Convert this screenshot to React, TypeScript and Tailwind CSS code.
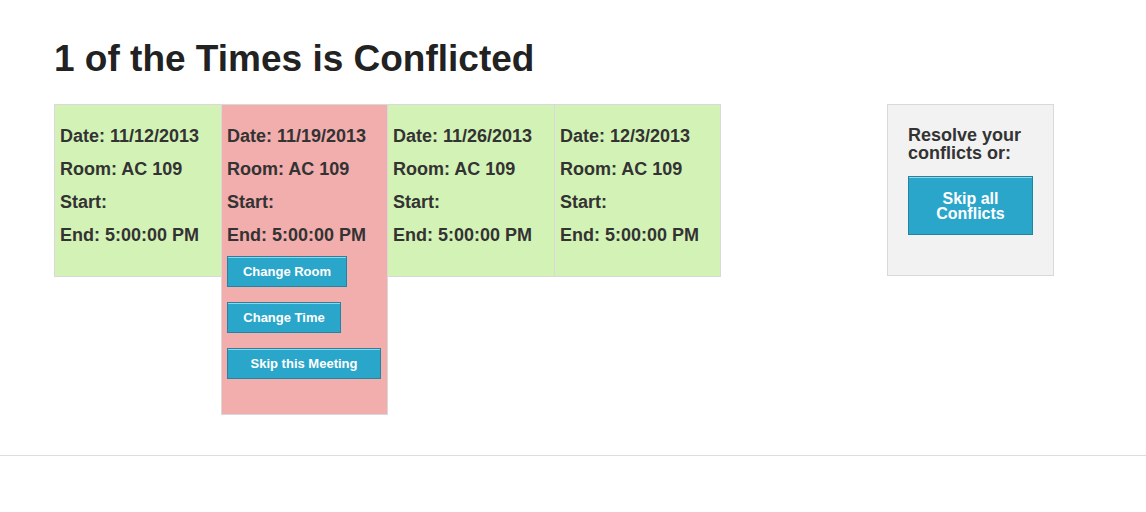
import React from "react";

const font = { fontFamily: '"Liberation Sans", Arial, Helvetica, sans-serif' };

function Card({ date, conflicted, w }: { date: string; conflicted?: boolean; w: string }) {
  return (
    <div
      className={
        w +
        " -ml-px first:ml-0 border border-[#d9d9d9] px-[5px] pt-[15px] text-[18px] font-bold text-[#333] " +
        (conflicted ? "bg-[#f2adad] pb-[35px]" : "bg-[#d3f2b6] h-[173px]")
      }
    >
      <div className="h-[33px] leading-[33px] whitespace-nowrap">Date: {date}</div>
      <div className="h-[33px] leading-[33px] whitespace-nowrap">Room: AC 109</div>
      <div className="h-[33px] leading-[33px] whitespace-nowrap">Start:</div>
      <div className="h-[33px] leading-[33px] whitespace-nowrap">End: 5:00:00 PM</div>
      {conflicted && (
        <div className="mt-[4px] flex flex-col items-start gap-[15px]">
          <Btn w="w-[120px]">Change Room</Btn>
          <Btn w="w-[114px]">Change Time</Btn>
          <Btn w="w-[154px]">Skip this Meeting</Btn>
        </div>
      )}
    </div>
  );
}

function Btn({ children, w }: { children: React.ReactNode; w: string }) {
  return (
    <button
      className={
        w +
        " h-[31px] bg-[#2ba6cb] border border-[#2284a1] shadow-[inset_0_1px_0_rgba(255,255,255,0.5)] text-white text-[13px] font-bold leading-[29px] text-center whitespace-nowrap"
      }
      style={font}
    >
      {children}
    </button>
  );
}

export default function App() {
  return (
    <div className="min-h-[512px] bg-white" style={font}>
      <div className="pl-[54px] pt-[40px]">
        <h1 className="text-[37px] leading-[37px] font-bold text-[#222] mb-[27px]">
          1 of the Times is Conflicted
        </h1>
        <div className="flex items-start">
          <div className="flex items-start">
            <Card w="w-[168px]" date="11/12/2013" />
            <Card w="w-[167px]" date="11/19/2013" conflicted />
            <Card w="w-[168px]" date="11/26/2013" />
            <Card w="w-[167px]" date="12/3/2013" />
          </div>
          <div className="ml-[166px] w-[167px] h-[172px] bg-[#f2f2f2] border border-[#d9d9d9] pl-[20px] pt-[21px]">
            <div className="text-[18px] leading-[18px] font-bold text-[#333]">
              Resolve your
              <br />
              conflicts or:
            </div>
            <button
              className="mt-[14px] w-[125px] h-[59px] bg-[#2ba6cb] border border-[#2284a1] shadow-[inset_0_1px_0_rgba(255,255,255,0.5)] text-white text-[16px] leading-[15px] font-bold text-center"
              style={font}
            >
              Skip all
              <br />
              Conflicts
            </button>
          </div>
        </div>
      </div>
      <div className="mt-[40px] border-t border-[#dddddd]" />
    </div>
  );
}
